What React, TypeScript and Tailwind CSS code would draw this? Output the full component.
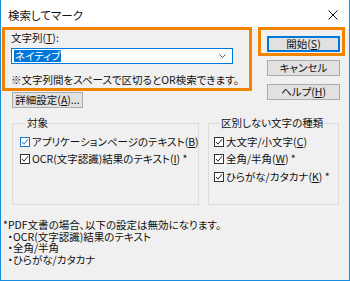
import React from 'react';

const font = 'font-["Meiryo_UI","Noto_Sans_CJK_JP",sans-serif] [font-feature-settings:"palt"]';

function Check({ blue = false }: { blue?: boolean }) {
  return (
    <span
      className={`w-[10px] h-[10px] shrink-0 bg-white border flex items-center justify-center ${
        blue ? 'border-[#1b78d0]' : 'border-[#333]'
      }`}
    >
      <svg width="8" height="8" viewBox="0 0 8 8" fill="none">
        <path d="M1 4 L3 6.2 L7 1.2" stroke={blue ? '#1b78d0' : '#222'} strokeWidth="1" />
      </svg>
    </span>
  );
}

function Row({ children, blue }: { children: React.ReactNode; blue?: boolean }) {
  return (
    <div className="h-[17.5px] flex items-center gap-[2px]">
      <Check blue={blue} />
      <span className="whitespace-nowrap">{children}</span>
    </div>
  );
}

function Btn({ children, primary }: { children: React.ReactNode; primary?: boolean }) {
  return (
    <div
      className={`h-[16px] w-[73px] bg-[#e1e1e1] border flex items-center justify-center leading-none ${
        primary ? 'border-[#0078d7] shadow-[inset_0_0_0_1px_#0078d7]' : 'border-[#adadad]'
      }`}
    >
      {children}
    </div>
  );
}

export default function App() {
  return (
    <div
      className={`relative w-[350px] h-[281px] bg-[#f0f0f0] border-x border-b border-[#1a8ce0] text-[10.5px] leading-[12px] text-[#111] flex flex-col ${font}`}
    >
      {/* Title bar */}
      <div className="h-[29px] bg-white flex items-center pl-[7px] pr-[11px] shrink-0">
        <span className="text-[11.5px]">検索してマーク</span>
        <svg className="ml-auto" width="10" height="10" viewBox="0 0 10 10">
          <path d="M0.5 0.5 L9.5 9.5 M9.5 0.5 L0.5 9.5" stroke="#111" strokeWidth="1" />
        </svg>
      </div>

      <div className="pl-[10px] flex">
        {/* Left column */}
        <div className="w-[222px] pt-[3px] flex flex-col">
          <div className="h-[12px]">
            文字列(<u>T</u>):
          </div>
          <div className="mt-[4px] h-[16px] bg-white border border-[#0078d7] flex items-center pl-[2px] pr-[6px]">
            <span className="bg-[#0078d7] text-white px-[1px] leading-[12px]">ネイティブ</span>
            <svg className="ml-auto" width="7" height="4" viewBox="0 0 7 4">
              <path d="M0.5 0.5 L3.5 3.5 L6.5 0.5" stroke="#555" fill="none" strokeWidth="1" />
            </svg>
          </div>
          <div className="mt-[10px] h-[12px] whitespace-nowrap">
            ※文字列間をスペースで区切るとOR検索できます。
          </div>
          <div className="mt-[6px] ml-[1px] h-[16px] w-[71px] bg-[#e1e1e1] border border-[#adadad] flex items-center justify-center">
            詳細設定(<u>A</u>)...
          </div>
        </div>

        {/* Right column */}
        <div className="ml-[34px] pt-[7px] flex flex-col gap-[8px]">
          <Btn primary>
            開始(<u>S</u>)
          </Btn>
          <Btn>キャンセル</Btn>
          <Btn>
            ヘルプ(<u>H</u>)
          </Btn>
        </div>
      </div>

      {/* Groups */}
      <div className="pl-[11px] mt-[9px] flex gap-[9px]">
        <fieldset className="w-[187px] min-w-0 h-[88px] border border-[#dcdcdc] pl-[7px]">
          <legend className="ml-[6px] px-[1px] h-[12px]">対象</legend>
          <div className="pt-[4px]">
            <Row blue>
              アプリケーションページのテキスト(<u>B</u>)
            </Row>
            <Row>
              OCR(文字認識)結果のテキスト(<u>I</u>) *
            </Row>
          </div>
        </fieldset>
        <fieldset className="w-[131px] min-w-0 h-[88px] border border-[#dcdcdc] pl-[5px]">
          <legend className="ml-[6px] px-[1px] h-[12px]">区別しない文字の種類</legend>
          <div className="pt-[4px]">
            <Row>
              大文字/小文字(<u>C</u>)
            </Row>
            <Row>
              全角/半角(<u>W</u>) *
            </Row>
            <Row>
              ひらがな/カタカナ(<u>K</u>) *
            </Row>
          </div>
        </fieldset>
      </div>

      {/* Footnote */}
      <div className="pl-[2px] mt-[14px] leading-[11.5px] whitespace-pre">
        <div>*PDF文書の場合、以下の設定は無効になります。</div>
        <div>{'  '}・OCR(文字認識)結果のテキスト</div>
        <div>{'  '}・全角/半角</div>
        <div>{'  '}・ひらがな/カタカナ</div>
      </div>

      {/* Orange highlight annotations */}
      <div className="absolute left-[1px] top-[27px] w-[250px] h-[64px] border-[3px] border-[#f08300] pointer-events-none" />
      <div className="absolute left-[257px] top-[27px] w-[87px] h-[29px] border-[3px] border-[#f08300] pointer-events-none" />
    </div>
  );
}
